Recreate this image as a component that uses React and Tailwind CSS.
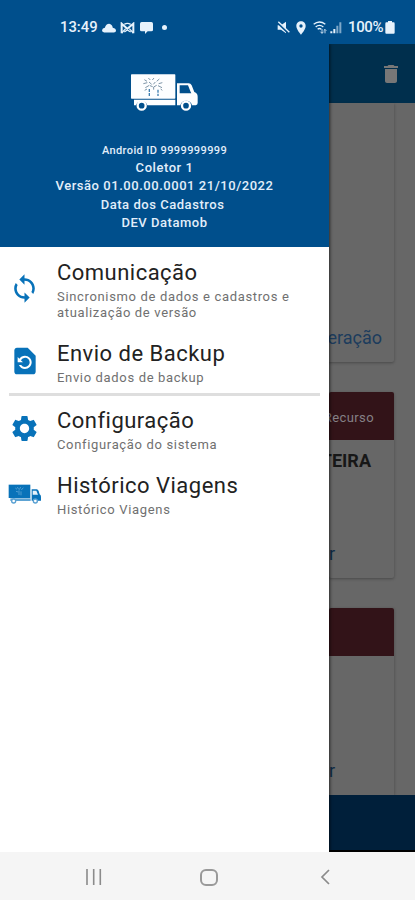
import {
  MdDelete,
  MdLocationOn,
  MdRestorePage,
  MdSettings,
  MdSync,
} from "react-icons/md";

function HeaderTruck() {
  return (
    <svg width="68" height="38" viewBox="0 0 204 114" className="mr-[2px] block">
      <rect x="3" y="4" width="133" height="73" rx="2" fill="#fdfeff" />
      <path
        d="M12 80H136V97H52A18 18 0 0 0 18 97H12Z"
        fill="#fdfeff"
      />
      <path
        d="M141 31H176Q182 31 185 37L193 57Q203 60 203 71V90Q203 96 197 97H186A18 18 0 0 0 151 97H141Z"
        fill="#fdfeff"
      />
      <path d="M149 37H174L182 57L184 61H149Z" fill="#004f8c" />
      <circle cx="35" cy="98" r="12" fill="#004f8c" stroke="#fdfeff" strokeWidth="7" />
      <circle cx="168" cy="98" r="12" fill="#004f8c" stroke="#fdfeff" strokeWidth="7" />
      {/* tree printed on the trunk */}
      <g stroke="#7d95a8" strokeWidth="3" fill="none">
        <path d="M58 48V69M84 50V69" stroke="#3f7fb0" strokeWidth="4" strokeDasharray="9 3" />
        <path d="M43 20l8 5M55 15l6 6M72 15l-5 6M88 18l-8 7M40 32l12-3M57 27l8 7M76 27l-6 7M97 29l-11 3M46 44l12-7M60 38l8 3M80 37l-9 5M84 38l12 6M44 52l7-4M92 48l5 4M71 42v8" />
      </g>
    </svg>
  );
}

function MenuTruck() {
  return (
    <svg width="34" height="22" viewBox="0 0 102 66" className="block">
      <rect x="2" y="5" width="65" height="40" fill="#0872b9" />
      <path d="M7 46H68V54H7Z" fill="#5da3d3" />
      <path d="M71 19H86Q90 19 92 24L95 34Q99 36 99 41V53H71Z" fill="#0872b9" />
      <path d="M74 23H85L90 35H74Z" fill="#e7f2fa" />
      <circle cx="17" cy="54" r="6" fill="#fff" stroke="#58a0d2" strokeWidth="4" />
      <circle cx="82" cy="54" r="6" fill="#fff" stroke="#58a0d2" strokeWidth="4" />
      <path
        d="M22 15l5 4M28 12l4 7M38 12l-4 8M46 14l-6 7M24 25l7 2M33 22v14M39 25v12"
        stroke="#72b2dd"
        strokeWidth="2"
        fill="none"
      />
    </svg>
  );
}

function StatusBar() {
  return (
    <div className="z-20 flex h-[44px] shrink-0 items-center bg-[#004f8c] pt-[11px] pl-[60px] text-[#e6f2fc]">
      <span className="w-[42px] text-[14.8px] leading-none font-medium">13:49</span>
      <svg width="14" height="10" viewBox="0 0 39 27" className="block">
        <path d="M6 26Q0 26 0 20Q1 14 8 13Q11 2 20 2Q28 3 30 13Q39 15 39 21Q39 26 33 26Z" fill="currentColor" />
      </svg>
      <svg width="15" height="12" viewBox="0 0 45 36" className="ml-[4px] block" fill="none" stroke="currentColor">
        <path d="M5 34V5L22 20L40 5V34" strokeWidth="6" />
        <path d="M5 33L17 20M40 33L28 20M13 30L22 24L32 30M13 7Q22 1 32 7" strokeWidth="4" />
      </svg>
      <svg width="13" height="12" viewBox="0 0 39 36" className="ml-[5px] block">
        <path d="M5 0H34Q39 0 39 5V24Q39 28 34 28H23L15 36V28H5Q0 28 0 24V5Q0 0 5 0Z" fill="currentColor" />
      </svg>
      <span className="ml-[9px] h-[5px] w-[5px] rounded-full bg-[#e6f2fc]" />
      <svg width="13" height="13" viewBox="0 0 39 39" className="ml-[110px] block">
        <path d="M2 13H12L27 2V37L12 26H2Z" fill="currentColor" />
        <path d="M2 4L36 37" stroke="#004f8c" strokeWidth="8" />
        <path d="M4 2L37 34" stroke="currentColor" strokeWidth="4" />
      </svg>
      <MdLocationOn size={16} className="ml-[3px]" />
      <svg width="14" height="13" viewBox="0 0 42 39" className="ml-[4px] block" fill="none" stroke="currentColor" strokeWidth="4">
        <path d="M2 10Q19-4 37 10M8 18Q19 8 31 18M14 25Q19 20 25 25" />
        <path d="M27 24V37M22 32l5 5 5-5M36 37V26M32 29l4-4 4 4" strokeWidth="2.5" />
      </svg>
      <svg width="12" height="12" viewBox="0 0 36 36" className="ml-[3px] block" fill="currentColor">
        <path d="M1 28H7V34H1ZM10 21H16V34H10Z" />
        <path d="M19 11H25V34H19ZM28 1H34V34H28Z" opacity="0.55" />
      </svg>
      <span className="ml-[6px] w-[37px] text-[15px] leading-none font-medium tracking-[-0.4px]">100%</span>
      <svg width="10" height="13" viewBox="0 0 30 39" className="block" fill="currentColor">
        <path d="M9 0H21V4H26Q29 4 29 8V35Q29 38 26 38H4Q1 38 1 35V8Q1 4 4 4H9Z" />
      </svg>
    </div>
  );
}

function MenuItem({ icon, title, text, className }) {
  return (
    <li className={`flex items-center ${className}`}>
      <span className="flex w-[49px] shrink-0 justify-center pb-[4px] text-[#0872b9]">{icon}</span>
      <div className="flex-1 pl-2">
        <p className="text-[22px] leading-[26px] tracking-[0.48px] text-[#222]">{title}</p>
        <p className="mt-[3px] w-[240px] text-[13px] leading-4 tracking-[0.66px] text-[#707070]">{text}</p>
      </div>
    </li>
  );
}

function Drawer() {
  return (
    <aside className="z-10 flex w-[329px] shrink-0 flex-col bg-white shadow-[1px_0_3px_rgba(0,0,0,0.6)]">
      <header className="flex h-[203px] flex-col items-center bg-[#004f8c] pt-[29px] text-[#e2eefa]">
        <HeaderTruck />
        <p className="mt-[33px] text-[11px] leading-[14px] font-medium tracking-[0.4px]">Android ID 9999999999</p>
        <div className="mt-[1px] text-center text-[13px] leading-[18.4px] font-medium tracking-[0.54px]">
          <p>Coletor 1</p>
          <p>Versão 01.00.00.0001 21/10/2022</p>
          <p className="pr-1">Data dos Cadastros</p>
          <p>DEV Datamob</p>
        </div>
      </header>
      <ul className="pt-[12.5px]">
        <MenuItem
          className="h-[61px]"
          icon={<MdSync size={31} />}
          title="Comunicação"
          text="Sincronismo de dados e cadastros e atualização de versão"
        />
        <MenuItem
          className="mt-5 h-[45px]"
          icon={<MdRestorePage size={32} />}
          title="Envio de Backup"
          text="Envio dados de backup"
        />
      </ul>
      <hr className="mx-[9px] mt-[7.5px] h-[3px] border-0 bg-[#dedede]" />
      <ul className="pt-[12px]">
        <MenuItem
          className="h-[45px]"
          icon={<MdSettings size={31} />}
          title="Configuração"
          text="Configuração do sistema"
        />
        <MenuItem
          className="mt-5 h-[45px]"
          icon={<MenuTruck />}
          title="Histórico Viagens"
          text="Histórico Viagens"
        />
      </ul>
    </aside>
  );
}

// Main screen behind the open drawer, already dimmed
function Backdrop() {
  return (
    <main className="flex min-w-0 flex-1 flex-col overflow-hidden bg-[#676767]">
      <div className="flex h-[59px] shrink-0 items-center justify-end bg-[#002f4d] pr-[12px] text-[#777]">
        <MdDelete size={24} />
      </div>
      <div className="flex flex-1 flex-col pr-[21px]">
        <section className="flex h-[259px] items-end justify-end rounded-br-xs pr-[12px] pb-[12px] shadow-[0_1px_3px_rgba(0,0,0,0.3)]">
          <span className="text-[18px] leading-6 text-[#1c3c5d]">eração</span>
        </section>
        <section className="mt-[30px] flex h-[186px] flex-col rounded-xs shadow-[0_1px_3px_rgba(0,0,0,0.3)]">
          <div className="flex h-[48px] items-center justify-end rounded-t-xs bg-[#321318] pt-1 pr-[20px] text-[13px] tracking-[0.4px] text-[#858085]">
            Recurso
          </div>
          <p className="mt-[9px] flex justify-end pr-[23px] text-[18px] leading-6 font-bold text-[#171717]">TEIRA</p>
          <p className="mt-auto pb-3 text-[18px] leading-6 text-[#102c46]">r</p>
        </section>
        <section className="mt-[30px] flex flex-1 flex-col shadow-[0_1px_3px_rgba(0,0,0,0.3)]">
          <div className="h-[48px] rounded-t-xs bg-[#321318]" />
          <p className="mt-auto pb-3 text-[18px] leading-6 text-[#102c46]">r</p>
        </section>
      </div>
      <div className="h-[57px] shrink-0 border-b-2 border-black bg-[#001f3a]" />
    </main>
  );
}

function NavigationBar() {
  return (
    <nav className="z-20 flex h-[48px] shrink-0 items-center bg-[#f5f5f5] pt-[2px] pl-[86px]">
      <svg width="16" height="16" viewBox="0 0 16 16" className="block" stroke="#8b8b8b" strokeWidth="1.6">
        <path d="M1 0V16M7.7 0V16M14.3 0V16" />
      </svg>
      <span className="ml-[98px] h-[17px] w-[18px] rounded-[6px] border-2 border-[#999]" />
      <svg width="10" height="16" viewBox="0 0 10 16" className="ml-[102px] block" fill="none" stroke="#8b8b8b" strokeWidth="1.7">
        <path d="M9 1L2 8L9 15" />
      </svg>
    </nav>
  );
}

export default function App() {
  return (
    <div className="flex h-[900px] w-[415px] flex-col overflow-hidden bg-white font-[Roboto,sans-serif]">
      <StatusBar />
      <div className="flex min-h-0 flex-1">
        <Drawer />
        <Backdrop />
      </div>
      <NavigationBar />
    </div>
  );
}
